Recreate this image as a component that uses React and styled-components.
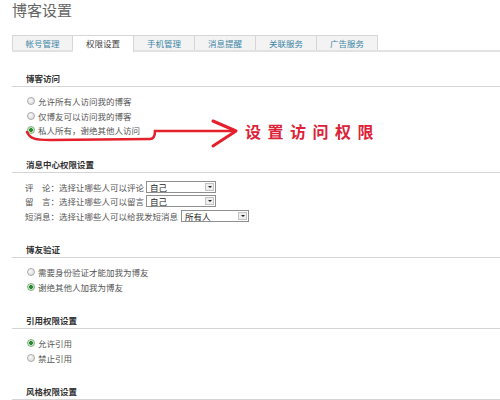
import styled, {createGlobalStyle} from "styled-components";

const Global = createGlobalStyle`
  html, body {
    margin: 0;
    padding: 0;
    background: #fff;
  }
  body {
    font-family: "Noto Sans CJK SC", "Noto Sans", sans-serif;
    width: 500px;
    height: 400px;
    overflow: hidden;
  }
`;

const Page = styled.div`
  position: relative;
  padding-left: 12px;
  height: 400px;
`;

const Title = styled.h1`
  margin: 0;
  height: 20px;
  line-height: 20px;
  font-size: 15px;
  font-weight: normal;
  color: #666;
`;

const TabBar = styled.div`
  display: flex;
  margin-top: 15px;
  border-bottom: 2px solid #e2e2e2;
  height: 15px;
`;

const Tab = styled.div`
  width: 61px;
  height: 15px;
  box-sizing: border-box;
  border: 1px solid #d6d6d6;
  border-left-width: ${p => (p.$first ? "1px" : "0")};
  border-bottom: none;
  background: ${p => (p.$active ? "#fff" : "#f3f3f3")};
  color: ${p => (p.$active ? "#444" : "#3d86a6")};
  font-size: 8.5px;
  line-height: 14px;
  text-align: center;
  position: relative;
  margin-bottom: ${p => (p.$active ? "-2px" : "0")};
  height: ${p => (p.$active ? "17px" : "15px")};
`;

const Section = styled.div`
  margin-top: 19px;
`;

const Header = styled.div`
  height: 14px;
  line-height: 14px;
  padding-bottom: 1px;
  padding-left: 14px;
  border-bottom: 1px solid #d4d4d4;
  font-size: 8.5px;
  font-weight: bold;
  color: #333;
`;

const List = styled.div`
  padding-top: 7px;
  padding-left: ${p => p.$indent || 15}px;
`;

const Row = styled.div`
  display: flex;
  align-items: center;
  height: 14.5px;
  font-size: 8.5px;
  color: #555;
  white-space: nowrap;
`;

const Radio = styled.span`
  display: inline-block;
  box-sizing: border-box;
  width: 8px;
  height: 8px;
  margin-right: 3px;
  border-radius: 50%;
  border: 1px solid ${p => (p.$checked ? "#7fae7f" : "#a9a9a9")};
  background: ${p =>
    p.$checked
      ? "radial-gradient(circle, #2f8a2f 0 1.6px, #cfe8c8 2.2px)"
      : "radial-gradient(circle at 35% 35%, #fafafa, #d6d6d6)"};
`;

const Label = styled.span`
  display: inline-block;
  width: 34px;
`;

const Select = styled.span`
  display: inline-flex;
  align-items: center;
  justify-content: space-between;
  box-sizing: border-box;
  width: ${p => p.$w || 70}px;
  height: 12px;
  margin-left: ${p => p.$gap || 2}px;
  padding: 0 1px 0 3px;
  border: 1px solid #8f8f8f;
  background: #fff;
  color: #222;
  font-size: 8.5px;
`;

const Arrow = styled.span`
  width: 9px;
  height: 8px;
  box-sizing: border-box;
  border: 1px solid #c4c4c4;
  background: #eee;
  display: flex;
  align-items: center;
  justify-content: center;
  &::after {
    content: "";
    border-left: 2px solid transparent;
    border-right: 2px solid transparent;
    border-top: 2px solid #222;
  }
`;

const Annotation = styled.svg`
  position: absolute;
  left: 0;
  top: 0;
  pointer-events: none;
`;

const Note = styled.div`
  position: absolute;
  left: 245px;
  top: 121px;
  font-size: 16px;
  font-weight: bold;
  letter-spacing: 6.5px;
  color: #dc2237;
  line-height: 20px;
`;

const tabs = ["帐号管理", "权限设置", "手机管理", "消息提醒", "关联服务", "广告服务"];

const RadioRow = ({checked, children}) => (
  <Row>
    <Radio $checked={checked} />
    {children}
  </Row>
);

export default function App() {
  return (
    <>
      <Global />
      <Page>
        <Title>博客设置</Title>
        <TabBar>
          {tabs.map((t, i) => (
            <Tab key={t} $first={i === 0} $active={i === 1}>{t}</Tab>
          ))}
        </TabBar>

        <Section>
          <Header>博客访问</Header>
          <List>
            <RadioRow>允许所有人访问我的博客</RadioRow>
            <RadioRow>仅博友可以访问我的博客</RadioRow>
            <RadioRow checked>私人所有，谢绝其他人访问</RadioRow>
          </List>
        </Section>

        <Section>
          <Header>消息中心权限设置</Header>
          <List $indent={13}>
            <Row>
              <Label>评&emsp;论：</Label>选择让哪些人可以评论
              <Select>自己<Arrow /></Select>
            </Row>
            <Row>
              <Label>留&emsp;言：</Label>选择让哪些人可以留言
              <Select>自己<Arrow /></Select>
            </Row>
            <Row>
              <Label>短消息：</Label>选择让哪些人可以给我发短消息
              <Select $gap={3} $w={68}>所有人<Arrow /></Select>
            </Row>
          </List>
        </Section>

        <Section>
          <Header>博友验证</Header>
          <List>
            <RadioRow>需要身份验证才能加我为博友</RadioRow>
            <RadioRow checked>谢绝其他人加我为博友</RadioRow>
          </List>
        </Section>

        <Section>
          <Header>引用权限设置</Header>
          <List>
            <RadioRow checked>允许引用</RadioRow>
            <RadioRow>禁止引用</RadioRow>
          </List>
        </Section>

        <Section>
          <Header>风格权限设置</Header>
        </Section>

        <Annotation width="500" height="400" viewBox="0 0 500 400">
          <path
            d="M27 132 C30 139 36 140 50 140 L150 139 C154 139 155 136 155 131 L234 131"
            fill="none"
            stroke="#e3202c"
            strokeWidth="2.5"
            strokeLinecap="round"
          />
          <path
            d="M213 121 L236 131 L213 146"
            fill="none"
            stroke="#e3202c"
            strokeWidth="3"
            strokeLinecap="round"
            strokeLinejoin="round"
          />
        </Annotation>
        <Note>设置访问权限</Note>
      </Page>
    </>
  );
}
